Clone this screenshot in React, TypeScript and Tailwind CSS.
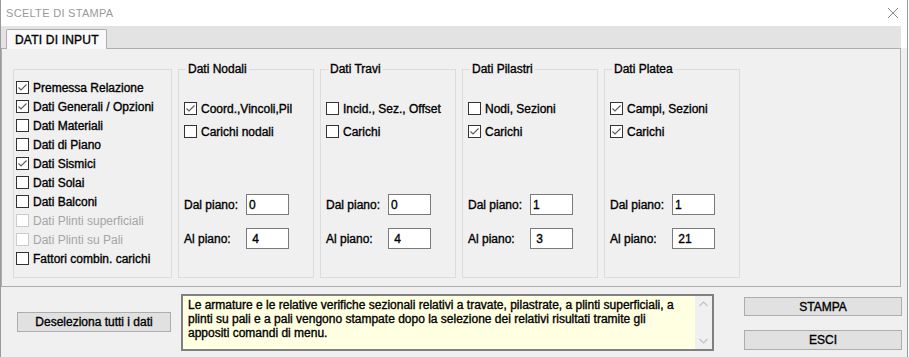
import React from "react";

const font = "font-['Liberation_Sans',Arial,sans-serif]";
const heavy = "[-webkit-text-stroke:0.35px_currentColor]";

function Check({ checked, disabled }: { checked?: boolean; disabled?: boolean }) {
  return (
    <span
      className={`w-[13px] h-[13px] shrink-0 flex items-center justify-center border bg-white ${
        disabled ? "border-[#cccccc]" : "border-[#333333]"
      }`}
    >
      {checked && (
        <svg width="11" height="11" viewBox="0 0 11 11">
          <polyline points="1.5,5.5 4,8 9.5,2.5" fill="none" stroke="#5a5a5a" strokeWidth="1.1" />
        </svg>
      )}
    </span>
  );
}

function CheckRow({ label, checked, disabled }: { label: string; checked?: boolean; disabled?: boolean }) {
  return (
    <div className="h-[19px] flex items-center gap-[4px]">
      <Check checked={checked} disabled={disabled} />
      <span className={`text-[12px] whitespace-nowrap ${disabled ? "text-[#a5a5a5]" : `text-black ${heavy}`}`}>{label}</span>
    </div>
  );
}

const mainItems: [string, boolean, boolean?][] = [
  ["Premessa Relazione", true],
  ["Dati Generali / Opzioni", true],
  ["Dati Materiali", false],
  ["Dati di Piano", false],
  ["Dati Sismici", true],
  ["Dati Solai", false],
  ["Dati Balconi", false],
  ["Dati Plinti superficiali", false, true],
  ["Dati Plinti su Pali", false, true],
  ["Fattori combin. carichi", false],
];

type Group = { title: string; items: [string, boolean][]; dal: string; al: string };

const groups: Group[] = [
  { title: "Dati Nodali", items: [["Coord.,Vincoli,Pil", true], ["Carichi nodali", false]], dal: "0", al: " 4" },
  { title: "Dati Travi", items: [["Incid., Sez., Offset", false], ["Carichi", false]], dal: "0", al: " 4" },
  { title: "Dati Pilastri", items: [["Nodi, Sezioni", false], ["Carichi", true]], dal: "1", al: " 3" },
  { title: "Dati Platea", items: [["Campi, Sezioni", true], ["Carichi", true]], dal: "1", al: " 21" },
];

function PianoRow({ label, value, className }: { label: string; value: string; className?: string }) {
  return (
    <div className={`flex items-center ${className ?? ""}`}>
      <span className={`w-[62px] text-[12px] text-black ${heavy}`}>{label}</span>
      <div className={`w-[43px] h-[21px] border border-[#7a7a7a] bg-white flex items-center pl-[2px] text-[12px] text-black whitespace-pre ${heavy}`}>
        {value}
      </div>
    </div>
  );
}

function GroupBox({ g }: { g: Group }) {
  return (
    <div className="relative w-[136px] h-[209px] border border-[#dcdcdc] pl-[5px] pt-[32px]">
      <span className={`absolute left-[7px] top-[-8px] px-[2px] bg-[#f0f0f0] text-[12px] leading-[14px] text-black ${heavy}`}>
        {g.title}
      </span>
      <div className="flex flex-col gap-[10px]">
        {g.items.map(([l, c]) => (
          <div key={l} className="h-[13px] flex items-center gap-[4px]">
            <Check checked={c} />
            <span className={`text-[12px] whitespace-nowrap text-black ${heavy}`}>{l}</span>
          </div>
        ))}
      </div>
      <PianoRow label="Dal piano:" value={g.dal} className="mt-[56px]" />
      <PianoRow label="Al piano:" value={g.al} className="mt-[13px]" />
    </div>
  );
}

export default function App() {
  return (
    <div className={`w-[908px] h-[357px] bg-[#f0f0f0] border-x border-[#9a9a9a] flex flex-col overflow-hidden ${font}`}>
      <div className="bg-white">
        {/* title bar */}
        <div className="h-[26px] flex items-center justify-between pl-[5px] pr-[8px]">
          <span className="text-[11px] text-[#999999] tracking-[0.3px]">SCELTE DI STAMPA</span>
          <svg width="12" height="12" viewBox="0 0 12 12">
            <path d="M1 1 L11 11 M11 1 L1 11" stroke="#8a8a8a" strokeWidth="1" />
          </svg>
        </div>

        {/* tab strip */}
        <div className="h-[23px] -mb-px bg-[#e3e3e3] w-[900px] flex items-end pl-[5px]">
          <div className="relative z-10 h-[20px] w-[101px] bg-[#f9f9f9] border-x border-t border-[#adadad] rounded-t-[2px] pl-[8px] flex items-center">
            <span className={`text-[12px] text-black tracking-[0.2px] ${heavy}`}>DATI DI INPUT</span>
          </div>
        </div>
      </div>

      {/* tab page */}
      <div className="w-[900px] h-[239px] border border-[#adadad] bg-[#f0f0f0] pl-[11px] pt-[20px] flex gap-[6px]">
        <div className="w-[159px] h-[209px] border border-[#dcdcdc] pl-[2px] pt-[8px]">
          {mainItems.map(([l, c, d]) => (
            <CheckRow key={l} label={l} checked={c} disabled={d} />
          ))}
        </div>
        {groups.map((g) => (
          <GroupBox key={g.title} g={g} />
        ))}
      </div>

      {/* bottom */}
      <div className="flex items-start pl-[16px]">
        <button className={`mt-[25px] w-[154px] h-[20px] bg-[#e1e1e1] border border-[#adadad] text-[12px] text-black ${heavy}`}>
          Deseleziona tutti i dati
        </button>
        <div className="ml-[10px] mt-[7px] w-[533px] h-[57px] border-2 border-[#808080] bg-[#ffffe1] flex">
          <div className={`flex-1 pl-[5px] pt-[2px] text-[12px] leading-[14px] text-black whitespace-nowrap ${heavy}`}>
            Le armature e le relative verifiche sezionali relativi a travate, pilastrate, a plinti superficiali, a
            <br />
            plinti su pali e a pali vengono stampate dopo la selezione dei relativi risultati tramite gli
            <br />
            appositi comandi di menu.
          </div>
          <div className="w-[17px] bg-[#f0f0f0] flex flex-col items-center justify-between py-[5px]">
            <svg width="9" height="6" viewBox="0 0 9 6">
              <polyline points="0.5,5 4.5,1 8.5,5" fill="none" stroke="#c2c2c2" strokeWidth="1.2" />
            </svg>
            <svg width="9" height="6" viewBox="0 0 9 6">
              <polyline points="0.5,1 4.5,5 8.5,1" fill="none" stroke="#c2c2c2" strokeWidth="1.2" />
            </svg>
          </div>
        </div>
        <div className="ml-[30px] flex flex-col">
          <button className={`mt-[10px] w-[158px] h-[19px] bg-[#e1e1e1] border border-[#adadad] text-[12px] text-black ${heavy}`}>
            STAMPA
          </button>
          <button className={`mt-[14px] w-[158px] h-[20px] bg-[#e1e1e1] border border-[#adadad] text-[12px] text-black ${heavy}`}>
            ESCI
          </button>
        </div>
      </div>
    </div>
  );
}
